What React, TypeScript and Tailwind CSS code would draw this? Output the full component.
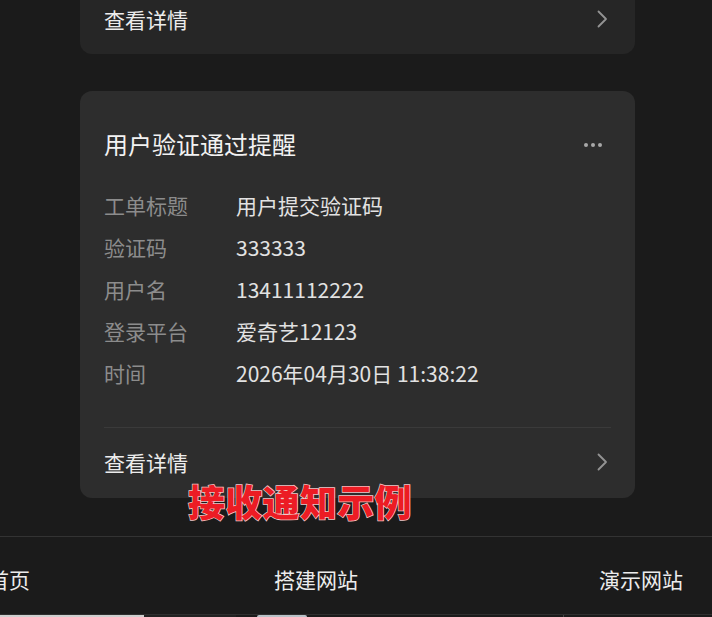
import type { ReactNode } from "react";

const fields: { label: string; value: string }[] = [
  { label: "工单标题", value: "用户提交验证码" },
  { label: "验证码", value: "333333" },
  { label: "用户名", value: "13411112222" },
  { label: "登录平台", value: "爱奇艺12123" },
  { label: "时间", value: "2026年04月30日 11:38:22" },
];

const font = "font-['Microsoft_YaHei','Noto_Sans_CJK_SC',sans-serif]";

function Chevron() {
  return (
    <svg width="12" height="18" viewBox="0 0 12 18" fill="none">
      <polyline
        points="2.5,1.5 10,9 2.5,16.5"
        stroke="#939393"
        strokeWidth="1.8"
        strokeLinecap="round"
        strokeLinejoin="round"
      />
    </svg>
  );
}

function DetailRow({ className }: { className?: string }) {
  return (
    <div className={`flex items-center justify-between ${className ?? ""}`}>
      <span className="text-[21px] leading-[30px] text-[#ececec]">查看详情</span>
      <span className="mr-[3px]">
        <Chevron />
      </span>
    </div>
  );
}

function Card({ children, className }: { children: ReactNode; className?: string }) {
  return <div className={`ml-[80px] w-[555px] px-[24px] ${className ?? ""}`}>{children}</div>;
}

export default function App() {
  return (
    <div className={`relative h-[617px] w-[712px] overflow-hidden bg-[#1b1b1b] ${font}`}>
      {/* previous notification, scrolled off the top */}
      <Card className="rounded-b-[12px] bg-[#262626]">
        <DetailRow className="h-[54px] pb-[16px]" />
      </Card>

      <Card className="mt-[37px] rounded-[12px] bg-[#2d2d2d] pt-[29px]">
        <div className="flex h-[48px] items-center justify-between">
          <span className="text-[24px] leading-[32px] text-[#f2f2f2]">用户验证通过提醒</span>
          <span className="mr-[9px] flex gap-[3px] pt-[1px]">
            <i className="h-[4px] w-[4px] rounded-full bg-[#a8a8a8]" />
            <i className="h-[4px] w-[4px] rounded-full bg-[#a8a8a8]" />
            <i className="h-[4px] w-[4px] rounded-full bg-[#a8a8a8]" />
          </span>
        </div>

        <div className="mt-[16px] flex flex-col">
          {fields.map((f) => (
            <div key={f.label} className="flex h-[42px] items-center text-[21px] leading-[30px]">
              <span className="w-[132px] shrink-0 text-[#8c8c8c]">{f.label}</span>
              <span className="text-[#e2e2e2]">{f.value}</span>
            </div>
          ))}
        </div>

        <div className="mt-[33px] h-px bg-[#3a3a3a]" />
        <DetailRow className="h-[70px] pb-[2px]" />
      </Card>

      <div className="absolute left-[188px] top-[481px] text-[37px] font-black leading-[40px] tracking-[0.3px] text-[#ec1c24] [-webkit-text-stroke:1.5px_#f1c9cb] [paint-order:stroke_fill]">
        接收通知示例
      </div>

      {/* bottom navigation */}
      <div className="mt-[38px] flex h-[78px] items-center overflow-hidden border-t border-[#333333] pt-[6px]">
        <div className="-ml-[12px] flex whitespace-nowrap text-[21px] leading-[30px] text-[#ececec]">
          <span>首页</span>
          <span className="ml-[244px]">搭建网站</span>
          <span className="ml-[241px]">演示网站</span>
        </div>
      </div>

      <div className="flex h-[3px] border-t border-[#2f2f2f]">
        <div className="w-[144px] bg-[#cfcfcf]" />
        <div className="w-[92px] bg-[#222222]" />
        <div className="ml-[21px] w-[50px] rounded-t-[4px] bg-[#b9c2c8]" />
        <div className="ml-[256px] w-px bg-[#444444]" />
      </div>
    </div>
  );
}
